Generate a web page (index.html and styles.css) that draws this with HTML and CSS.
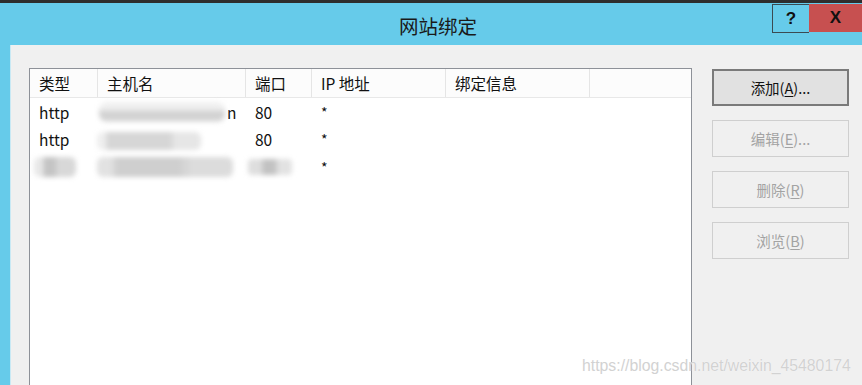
FILE: index.html
```html
<!DOCTYPE html>
<html lang="zh-CN">
<head>
<meta charset="utf-8">
<title>网站绑定</title>
<link rel="stylesheet" href="styles.css">
</head>
<body>
<div class="window">
  <div class="titlebar">
    <div class="title">网站绑定</div>
    <div class="caption-btns">
      <div class="cap-help">?</div>
      <div class="cap-close">X</div>
    </div>
  </div>
  <div class="client">
    <div class="list">
      <div class="hdr">
        <div class="hc c1">类型</div>
        <div class="hc c2">主机名</div>
        <div class="hc c3">端口</div>
        <div class="hc c4">IP 地址</div>
        <div class="hc c5">绑定信息</div>
        <div class="hc c6"></div>
      </div>
      <div class="row">
        <div class="cell c1">http</div>
        <div class="cell c2"><span class="blur b1"></span><span class="tail">n</span></div>
        <div class="cell c3">80</div>
        <div class="cell c4 star">*</div>
      </div>
      <div class="row">
        <div class="cell c1">http</div>
        <div class="cell c2"><span class="blur b2"></span></div>
        <div class="cell c3">80</div>
        <div class="cell c4 star">*</div>
      </div>
      <div class="row">
        <div class="cell c1"><span class="blur b3"></span></div>
        <div class="cell c2"><span class="blur b4"></span></div>
        <div class="cell c3"><span class="blur b5"></span></div>
        <div class="cell c4 star">*</div>
      </div>
    </div>
    <div class="buttons">
      <div class="btn primary">添加(<u>A</u>)...</div>
      <div class="btn disabled">编辑(<u>E</u>)...</div>
      <div class="btn disabled">删除(<u>R</u>)</div>
      <div class="btn disabled">浏览(<u>B</u>)</div>
    </div>
  </div>
</div>
<div class="watermark">https://blog.csdn.net/weixin_45480174</div>
</body>
</html>
```

FILE: styles.css
```css
html, body {
  margin: 0;
  padding: 0;
}
body {
  width: 862px;
  height: 385px;
  overflow: hidden;
  position: relative;
  background: #66cbea;
  font-family: "Noto Sans CJK SC", "Noto Sans", sans-serif;
}
.window {
  border-top: 3px solid #2e2e2e;
  height: 382px;
  display: flex;
  flex-direction: column;
  background: #66cbea;
}
.titlebar {
  height: 42px;
  position: relative;
  display: flex;
  align-items: center;
  justify-content: center;
}
.title {
  font-size: 19.5px;
  color: #1a1a1a;
  margin-left: 14px;
  margin-top: 2px;
}
.caption-btns {
  position: absolute;
  top: 1px;
  right: 0;
  display: flex;
}
.cap-help {
  width: 36px;
  height: 27px;
  border: 1px solid #3b4a52;
  border-right: none;
  background: #66cbea;
  font-family: "Liberation Sans", Arial, sans-serif;
  font-weight: bold;
  font-size: 17px;
  display: flex;
  align-items: center;
  justify-content: center;
  color: #111;
}
.cap-close {
  width: 53px;
  height: 28px;
  background: #c75050;
  font-family: "Liberation Sans", Arial, sans-serif;
  font-weight: bold;
  font-size: 17px;
  display: flex;
  align-items: center;
  justify-content: center;
  color: #111;
}
.client {
  flex: 1;
  margin-left: 10px;
  background: #f0f0f0;
  border-left: 1px solid #c9e9f4;
  display: flex;
  padding: 23px 13px 0 18px;
  gap: 20px;
}
.list {
  width: 661px;
  border: 1px solid #8d9198;
  border-bottom: none;
  background: #fff;
  font-size: 15.5px;
  color: #111;
}
.hdr {
  display: flex;
  height: 28px;
  border-bottom: 1px solid #e8e8e8;
  background: #fcfcfc;
}
.hc {
  box-sizing: border-box;
  border-right: 1px solid #e5e5e5;
  padding-left: 9px;
  line-height: 28px;
}
.c1 { width: 68px; }
.c2 { width: 148px; }
.c3 { width: 66px; }
.c4 { width: 134px; }
.c5 { width: 144px; }
.c6 { flex: 1; border-right: none; }
.row {
  display: flex;
  height: 27.5px;
  align-items: center;
}
.cell {
  box-sizing: border-box;
  padding-left: 9px;
  position: relative;
  height: 100%;
  display: flex;
  align-items: center;
}
.star {
  font-size: 14px;
  padding-left: 9px;
}
.blur {
  display: block;
  filter: blur(2.5px);
}
.b1 {
  width: 126px;
  height: 20px;
  margin-left: -8px;
  background: linear-gradient(180deg, #f0f0f0 0 35%, #d2d2d2 50% 85%, #e6e6e6 100%);
  border-radius: 8px;
}
.tail {
  margin-left: 2px;
}
.b2 {
  width: 104px;
  height: 18px;
  margin-left: -10px;
  margin-top: 4px;
  background: linear-gradient(90deg, #eeeeee 0 8%, #d6d6d6 10% 70%, #e6e6e6 75% 100%);
  border-radius: 6px;
}
.b3 {
  width: 42px;
  height: 20px;
  margin-left: -5px;
  background: linear-gradient(90deg, #e8e8e8 0 20%, #c4c4c4 25% 50%, #d8d8d8 55% 100%);
  border-radius: 6px;
}
.b4 {
  width: 136px;
  height: 20px;
  margin-left: -10px;
  background: linear-gradient(90deg, #e2e2e2 0 10%, #cfcfcf 15% 60%, #dcdcdc 70% 100%);
  border-radius: 6px;
}
.b5 {
  width: 44px;
  height: 16px;
  margin-left: -7px;
  background: linear-gradient(90deg, #dedede 0 30%, #c2c2c2 35% 60%, #e2e2e2 70% 100%);
  border-radius: 4px;
}
.buttons {
  display: flex;
  flex-direction: column;
  gap: 14px;
  padding-top: 1px;
}
.btn {
  box-sizing: border-box;
  width: 137px;
  height: 37px;
  display: flex;
  align-items: center;
  justify-content: center;
  font-size: 14.5px;
}
.btn u {
  text-underline-offset: 2px;
}
.primary {
  background: #e1e1e1;
  border: 2px solid #7a7a7a;
  color: #111;
}
.disabled {
  background: #f0f0f0;
  border: 1px solid #cfcfcf;
  color: #a3a3a3;
}
.watermark {
  position: absolute;
  left: 582px;
  top: 357px;
  font-family: "Liberation Sans", Arial, sans-serif;
  font-size: 15.8px;
  color: #d2d2d2;
  text-shadow: 0 0 1px #ffffff;
  white-space: nowrap;
}
```
